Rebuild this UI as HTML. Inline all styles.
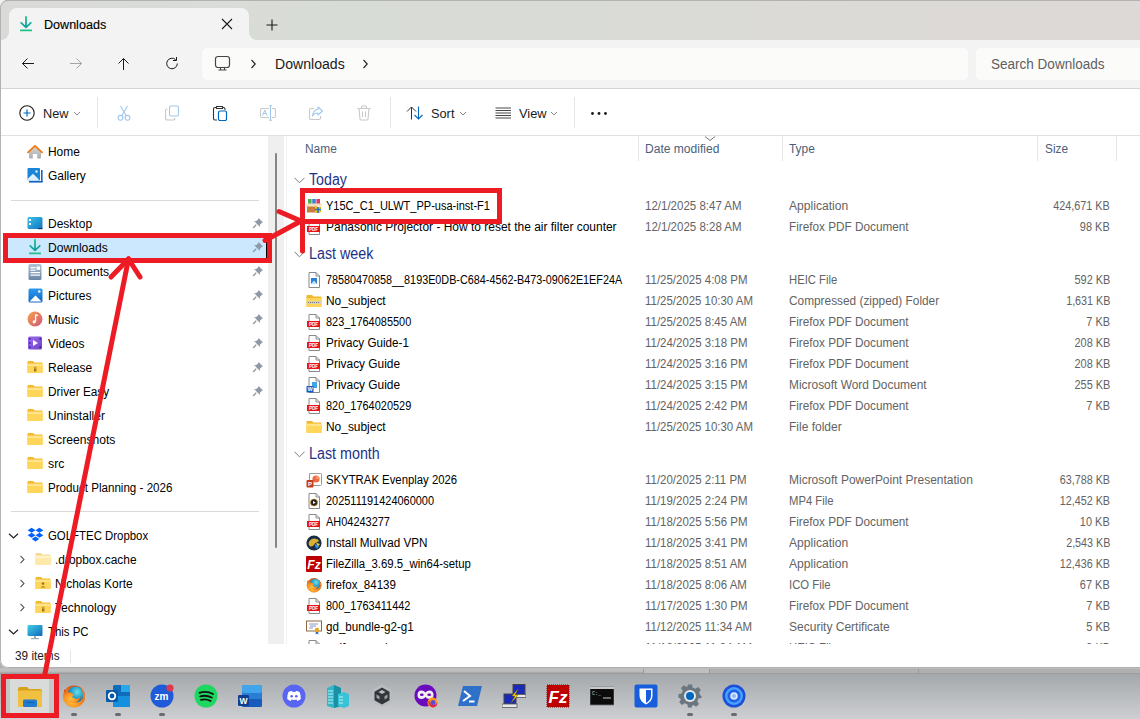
<!DOCTYPE html>
<html><head><meta charset="utf-8">
<style>
*{margin:0;padding:0;box-sizing:border-box}
html,body{width:1140px;height:719px;overflow:hidden;font-family:"Liberation Sans",sans-serif;position:relative;background:#b0b0b4}
.a{position:absolute;display:block}
.t{position:absolute;white-space:nowrap;line-height:14px;height:14px}
.side{font-size:12px;color:#000}
.nm{font-size:12px;color:#000}
.det{font-size:12px;color:#636363}
.grp{font-size:15px;color:#1e3287;line-height:18px;height:18px}
.hdr{font-size:12px;color:#4c607a}
.red{position:absolute;border:5px solid #ed1c24}
.rl{position:absolute;height:5px;background:#ed1c24;border-radius:2.5px;transform-origin:0 50%}
</style></head>
<body>

<div class="a" style="left:0;top:0;width:20px;height:20px;background:#efefef"></div>
<div class="a" style="left:0;top:0;width:1140px;height:668px;overflow:hidden;border-radius:8px 0 0 8px;background:#fff">
<div class="a" style="left:0;top:0;width:1140px;height:40px;background:linear-gradient(90deg,#dadbd9 0%,#d8dcd6 30%,#d9dbd6 50%,#dcdad6 75%,#dcd9d6 100%)"></div>
<div class="a" style="left:0;top:32px;width:9px;height:8px;background:#f3f3f3"></div><div class="a" style="left:0;top:24px;width:9px;height:16px;background:#dadbd9;border-radius:0 0 8px 0"></div>
<div class="a" style="left:249px;top:32px;width:9px;height:8px;background:#f3f3f3"></div><div class="a" style="left:249px;top:24px;width:9px;height:16px;background:#d8dcd6;border-radius:0 0 0 8px"></div>
<div class="a" style="left:0;top:0;width:1140px;height:1px;background:#a8a8a8"></div>
<div class="a" style="left:468px;top:0;width:113px;height:1px;background:linear-gradient(90deg,#777 0,#333 9px,#222 50%,#333 98px,#777 100%)"></div>
<div class="a" style="left:923px;top:0;width:6px;height:1px;background:#333"></div><div class="a" style="left:945px;top:0;width:6px;height:1px;background:#333"></div>
<div class="a" style="left:9px;top:8px;width:240px;height:33px;background:#f3f3f3;border-radius:8px 8px 0 0"></div>
<svg class="a" style="left:18px;top:16px" width="16" height="16" viewBox="0 0 16 16"><defs><linearGradient id="dl" x1="0" y1="0" x2="0" y2="1"><stop offset="0" stop-color="#1fc08a"/><stop offset="1" stop-color="#15a0a0"/></linearGradient></defs>
<path d="M8 1 V11 M3.2 6.8 L8 11.3 L12.8 6.8" fill="none" stroke="url(#dl)" stroke-width="1.8" stroke-linecap="round" stroke-linejoin="round"/><rect x="2" y="13.6" width="12" height="1.7" rx="0.4" fill="#20c08a"/></svg>
<div class="t side" style="left:44px;top:18px;font-size:12px;transform:scaleX(1.0471);transform-origin:left 50%;color:#000;-webkit-text-stroke:0.12px #000;">Downloads</div>
<svg class="a" style="left:221px;top:18px" width="12" height="12" viewBox="0 0 12 12"><path d="M1 1 L11 11 M11 1 L1 11" stroke="#1a1a1a" stroke-width="1.1"/></svg>
<svg class="a" style="left:266px;top:19px" width="12" height="12" viewBox="0 0 12 12"><path d="M6 0.5 V11.5 M0.5 6 H11.5" stroke="#1a1a1a" stroke-width="1.1"/></svg>
<div class="a" style="left:0;top:40px;width:1140px;height:48px;background:#f3f3f3"></div>
<div class="a" style="left:0;top:88px;width:1140px;height:1px;background:#d5d5d5"></div>
<svg class="a" style="left:21px;top:57px" width="14" height="14" viewBox="0 0 14 14"><path d="M13 6.5 H1.5 M6.5 1.5 L1.5 6.5 L6.5 11.5" fill="none" stroke="#1a1a1a" stroke-width="1"/></svg>
<svg class="a" style="left:69px;top:57px" width="14" height="14" viewBox="0 0 14 14"><path d="M1 6.5 H12.5 M7.5 1.5 L12.5 6.5 L7.5 11.5" fill="none" stroke="#a3a3a3" stroke-width="1"/></svg>
<svg class="a" style="left:116px;top:57px" width="14" height="14" viewBox="0 0 14 14"><path d="M7.5 13 V1.5 M2.5 6.5 L7.5 1.5 L12.5 6.5" fill="none" stroke="#1a1a1a" stroke-width="1"/></svg>
<svg class="a" style="left:165px;top:56px" width="14" height="14" viewBox="0 0 14 14"><path d="M12.3 7.5 A5.3 5.3 0 1 1 10.6 3.6" fill="none" stroke="#1a1a1a" stroke-width="1"/><path d="M11.5 1 V4.5 H8" fill="none" stroke="#1a1a1a" stroke-width="1"/></svg>
<div class="a" style="left:202px;top:48px;width:766px;height:32px;background:#fbfbfa;border-radius:5px"></div>
<svg class="a" style="left:214px;top:55px" width="18" height="17" viewBox="0 0 18 17"><rect x="1.5" y="1.5" width="14" height="11" rx="2.5" fill="none" stroke="#454545" stroke-width="1.2"/><path d="M6.5 12.5 V14.5 M10.5 12.5 V14.5 M4.5 15 H12.5" stroke="#454545" stroke-width="1.1"/></svg>
<svg class="a" style="left:249px;top:59px" width="8" height="10" viewBox="0 0 8 10"><path d="M2.5 1 L6.2 5 L2.5 9" fill="none" stroke="#2a2a2a" stroke-width="1.2"/></svg>
<div class="t side" style="left:275px;top:56px;font-size:14px;transform:scaleX(1.0068);transform-origin:left 50%;color:#1a1a1a;line-height:16px;height:16px;">Downloads</div>
<svg class="a" style="left:361px;top:59px" width="8" height="10" viewBox="0 0 8 10"><path d="M2.5 1 L6.2 5 L2.5 9" fill="none" stroke="#2a2a2a" stroke-width="1.2"/></svg>
<div class="a" style="left:976px;top:48px;width:200px;height:32px;background:#fbfbfa;border-radius:5px"></div>
<div class="t side" style="left:991px;top:56px;font-size:14px;transform:scaleX(0.9659);transform-origin:left 50%;color:#5f5f5f;line-height:16px;height:16px;">Search Downloads</div>
<div class="a" style="left:0;top:89px;width:1140px;height:46px;background:#fff"></div>
<div class="a" style="left:0;top:135px;width:1140px;height:1px;background:#e1e1e1"></div>
<svg class="a" style="left:19px;top:105px" width="16" height="16" viewBox="0 0 16 16"><circle cx="8" cy="8" r="7.2" fill="none" stroke="#1a1a1a" stroke-width="1.1"/><path d="M8 4.5 V11.5 M4.5 8 H11.5" stroke="#0067c0" stroke-width="1.2"/></svg>
<div class="t side" style="left:43px;top:107px;font-size:13px;transform:scaleX(0.9829);transform-origin:left 50%;color:#1a1a1a;">New</div>
<svg class="a" style="left:73px;top:111px" width="8" height="5" viewBox="0 0 8 5"><path d="M1 1 L4 4 L7 1" fill="none" stroke="#8a8a8a" stroke-width="1"/></svg>
<div class="a" style="left:97px;top:97px;width:1px;height:31px;background:#e5e5e5"></div>
<svg class="a" style="left:116px;top:105px" width="16" height="16" viewBox="0 0 16 16"><path d="M4.5 1 L10.5 11 M11.5 1 L5.5 11" stroke="#9fc8ec" stroke-width="1.1"/><circle cx="4.5" cy="12.8" r="2.4" fill="none" stroke="#9fc8ec" stroke-width="1.1"/><circle cx="11.5" cy="12.8" r="2.4" fill="none" stroke="#9fc8ec" stroke-width="1.1"/></svg>
<svg class="a" style="left:164px;top:105px" width="16" height="16" viewBox="0 0 16 16"><rect x="5.5" y="1" width="9" height="10" rx="1.5" fill="none" stroke="#9fc8ec" stroke-width="1.1"/><path d="M3.5 4 Q1.5 4 1.5 6 V13 Q1.5 15 3.5 15 H9 Q11 15 11 13" fill="none" stroke="#c8c8c8" stroke-width="1.1"/></svg>
<svg class="a" style="left:212px;top:105px" width="16" height="16" viewBox="0 0 16 16"><path d="M4 2.5 H3 Q1.5 2.5 1.5 4 V13.5 Q1.5 15 3 15 H5" fill="none" stroke="#333" stroke-width="1.1"/><path d="M4.5 1.5 H10.5 V3.5 H4.5Z M10.5 2.5 H11.5 Q13 2.5 13 4 V5" fill="none" stroke="#333" stroke-width="1.1"/><rect x="6.5" y="6" width="8" height="9.5" rx="1.5" fill="none" stroke="#0067c0" stroke-width="1.2"/></svg>
<svg class="a" style="left:260px;top:105px" width="16" height="16" viewBox="0 0 16 16"><rect x="0.5" y="3.5" width="15" height="9" rx="1.5" fill="none" stroke="#c8c8c8" stroke-width="1.1"/><rect x="9" y="2" width="3" height="12" fill="#fff"/><path d="M10.5 0.5 V15.5 M9 0.8 H12 M9 15.2 H12" stroke="#9fc8ec" stroke-width="1.1"/><path d="M2.5 10.5 L4.8 5 L7 10.5 M3.3 8.6 H6.3" fill="none" stroke="#9fc8ec" stroke-width="1"/></svg>
<svg class="a" style="left:308px;top:105px" width="16" height="16" viewBox="0 0 16 16"><path d="M6 3.5 H3 Q1.5 3.5 1.5 5 V13 Q1.5 14.5 3 14.5 H11 Q12.5 14.5 12.5 13 V11" fill="none" stroke="#c8c8c8" stroke-width="1.1"/><path d="M10 2 L14.5 6 L10 10 V8 Q6 8 4.5 11 Q5 5 10 4.2Z" fill="none" stroke="#9fc8ec" stroke-width="1.1" stroke-linejoin="round"/></svg>
<svg class="a" style="left:356px;top:105px" width="16" height="16" viewBox="0 0 16 16"><path d="M1.5 3.5 H14.5 M5.5 3.5 V2 Q5.5 1 6.5 1 H9.5 Q10.5 1 10.5 2 V3.5 M3 3.5 L4 14 Q4.1 15 5 15 H11 Q11.9 15 12 14 L13 3.5 M6.5 6.5 V12 M9.5 6.5 V12" fill="none" stroke="#c8c8c8" stroke-width="1.1"/></svg>
<div class="a" style="left:390px;top:97px;width:1px;height:31px;background:#e5e5e5"></div>
<svg class="a" style="left:406px;top:106px" width="18" height="14" viewBox="0 0 18 14"><path d="M5.5 13.5 V1 M1 5.5 L5.5 1 L10 5.5" fill="none" stroke="#333" stroke-width="1"/><path d="M12.5 0.5 V13 M8.5 9 L12.5 13 L16.5 9" fill="none" stroke="#0067c0" stroke-width="1.1"/></svg>
<div class="t side" style="left:431px;top:107px;font-size:13px;transform:scaleX(0.9826);transform-origin:left 50%;color:#1a1a1a;">Sort</div>
<svg class="a" style="left:459px;top:111px" width="8" height="5" viewBox="0 0 8 5"><path d="M1 1 L4 4 L7 1" fill="none" stroke="#8a8a8a" stroke-width="1"/></svg>
<svg class="a" style="left:495px;top:107px" width="17" height="12" viewBox="0 0 17 12"><path d="M0.5 1 H16 M0.5 3.5 H16 M0.5 6 H16 M0.5 8.5 H16 M0.5 11 H16" stroke="#333" stroke-width="0.9"/></svg>
<div class="t side" style="left:519px;top:107px;font-size:13px;transform:scaleX(0.9888);transform-origin:left 50%;color:#1a1a1a;">View</div>
<svg class="a" style="left:550px;top:111px" width="8" height="5" viewBox="0 0 8 5"><path d="M1 1 L4 4 L7 1" fill="none" stroke="#8a8a8a" stroke-width="1"/></svg>
<div class="a" style="left:574px;top:97px;width:1px;height:31px;background:#e5e5e5"></div>
<svg class="a" style="left:590px;top:111px" width="18" height="6" viewBox="0 0 18 6"><circle cx="2.5" cy="2.5" r="1.4" fill="#1a1a1a"/><circle cx="9" cy="2.5" r="1.4" fill="#1a1a1a"/><circle cx="15.5" cy="2.5" r="1.4" fill="#1a1a1a"/></svg>
<div class="a" style="left:4px;top:236px;width:264px;height:24px;background:#cce8ff"></div>
<div class="a" style="left:266px;top:236px;width:1px;height:24px;background:#000"></div>
<svg class="a" style="left:27px;top:144px" width="16" height="16" viewBox="0 0 16 16"><defs><linearGradient id="hg" x1="0" y1="0" x2="0" y2="1"><stop offset="0" stop-color="#d4d6d8"/><stop offset="1" stop-color="#a9abad"/></linearGradient></defs>
<path d="M2 8 L8 2.6 L14 8 V13.6 Q14 14.6 13 14.6 H10.2 V10 H5.8 V14.6 H3 Q2 14.6 2 13.6Z" fill="url(#hg)"/>
<path d="M1 8.3 L8 1.8 L15 8.3" fill="none" stroke="#f07a10" stroke-width="1.8" stroke-linecap="round" stroke-linejoin="round"/></svg>
<div class="t side" style="left:48px;top:145px;font-size:12px;transform:scaleX(0.9929);transform-origin:left 50%;">Home</div>
<svg class="a" style="left:27px;top:167px" width="16" height="16" viewBox="0 0 16 16"><rect x="0.5" y="1" width="12.5" height="12.5" rx="1" fill="#1a86d9"/>
<path d="M0.5 12 L6 6.8 L11.5 12 V13.5 H0.5Z" fill="#dff0ff"/><rect x="8.5" y="3.5" width="2" height="2" fill="#fff"/>
<rect x="14" y="3" width="1.6" height="12" fill="#1565c0"/><rect x="2" y="14" width="13.6" height="1.6" fill="#1565c0"/></svg>
<div class="t side" style="left:48px;top:169px;font-size:12px;transform:scaleX(0.9957);transform-origin:left 50%;">Gallery</div>
<svg class="a" style="left:27px;top:215px" width="16" height="16" viewBox="0 0 16 16"><defs><linearGradient id="dg" x1="0" y1="0" x2="1" y2="1"><stop offset="0" stop-color="#3cc3e6"/><stop offset="1" stop-color="#1273c2"/></linearGradient></defs>
<rect x="0.5" y="2" width="15" height="12" rx="1.5" fill="url(#dg)"/><rect x="2" y="4" width="2" height="2" fill="#fff"/><rect x="2" y="8" width="2" height="2" fill="#fff"/><rect x="11" y="13" width="4.5" height="1.2" fill="#0b3a6a"/></svg>
<div class="t side" style="left:48px;top:217px;font-size:12px;transform:scaleX(1.0011);transform-origin:left 50%;">Desktop</div>
<svg class="a" style="left:252px;top:217px" width="12" height="12" viewBox="0 0 12 12"><path d="M6.5 1 L11 5.5 L9.6 6 L7.8 8 L8 10 L2 4 L4 4.2 L6 2.4Z" fill="#8d99a6"/><path d="M4.2 7.8 L1 11" stroke="#8d99a6" stroke-width="1.3"/></svg>
<svg class="a" style="left:27px;top:239px" width="16" height="16" viewBox="0 0 16 16"><defs><linearGradient id="dl" x1="0" y1="0" x2="0" y2="1"><stop offset="0" stop-color="#1fc08a"/><stop offset="1" stop-color="#15a0a0"/></linearGradient></defs>
<path d="M8 1 V11 M3.2 6.8 L8 11.3 L12.8 6.8" fill="none" stroke="url(#dl)" stroke-width="1.8" stroke-linecap="round" stroke-linejoin="round"/><rect x="2" y="13.6" width="12" height="1.7" rx="0.4" fill="#20c08a"/></svg>
<div class="t side" style="left:48px;top:241px;font-size:12px;transform:scaleX(1.0068);transform-origin:left 50%;">Downloads</div>
<svg class="a" style="left:252px;top:241px" width="12" height="12" viewBox="0 0 12 12"><path d="M6.5 1 L11 5.5 L9.6 6 L7.8 8 L8 10 L2 4 L4 4.2 L6 2.4Z" fill="#8d99a6"/><path d="M4.2 7.8 L1 11" stroke="#8d99a6" stroke-width="1.3"/></svg>
<svg class="a" style="left:27px;top:264px" width="16" height="16" viewBox="0 0 16 16"><defs><linearGradient id="dc" x1="0" y1="0" x2="0" y2="1"><stop offset="0" stop-color="#b0c2d4"/><stop offset="1" stop-color="#6a86a6"/></linearGradient></defs>
<rect x="1.5" y="0" width="13" height="16" rx="1.5" fill="url(#dc)"/><rect x="3.5" y="3" width="5" height="1.3" fill="#fff"/><rect x="9.5" y="2.5" width="3.5" height="3.3" fill="#fff"/><rect x="3.5" y="5.5" width="5" height="1.2" fill="#fff"/><rect x="3.5" y="8" width="9.5" height="1.2" fill="#fff"/><rect x="3.5" y="10.5" width="9.5" height="1.2" fill="#fff"/></svg>
<div class="t side" style="left:48px;top:265px;font-size:12px;transform:scaleX(1.0072);transform-origin:left 50%;">Documents</div>
<svg class="a" style="left:252px;top:265px" width="12" height="12" viewBox="0 0 12 12"><path d="M6.5 1 L11 5.5 L9.6 6 L7.8 8 L8 10 L2 4 L4 4.2 L6 2.4Z" fill="#8d99a6"/><path d="M4.2 7.8 L1 11" stroke="#8d99a6" stroke-width="1.3"/></svg>
<svg class="a" style="left:28px;top:288px" width="16" height="16" viewBox="0 0 16 16"><defs><linearGradient id="pg" x1="0" y1="0" x2="0" y2="1"><stop offset="0" stop-color="#2b9af0"/><stop offset="1" stop-color="#1466c2"/></linearGradient></defs><rect x="0.5" y="0.5" width="14" height="14" rx="1.5" fill="url(#pg)"/><path d="M1.5 13.5 L7.5 7.5 L13.5 13.5Z" fill="#fff"/><circle cx="11.3" cy="3.5" r="1.2" fill="#fff"/></svg>
<div class="t side" style="left:48px;top:289px;font-size:12px;transform:scaleX(1.0025);transform-origin:left 50%;">Pictures</div>
<svg class="a" style="left:252px;top:289px" width="12" height="12" viewBox="0 0 12 12"><path d="M6.5 1 L11 5.5 L9.6 6 L7.8 8 L8 10 L2 4 L4 4.2 L6 2.4Z" fill="#8d99a6"/><path d="M4.2 7.8 L1 11" stroke="#8d99a6" stroke-width="1.3"/></svg>
<svg class="a" style="left:27px;top:311px" width="16" height="16" viewBox="0 0 16 16"><defs><linearGradient id="mu" x1="0" y1="0" x2="1" y2="1"><stop offset="0" stop-color="#f6a34a"/><stop offset="1" stop-color="#d2567a"/></linearGradient></defs>
<circle cx="8" cy="8" r="7.5" fill="url(#mu)"/><path d="M8.6 3.5 V10.5" stroke="#fff" stroke-width="1.3"/><circle cx="7.2" cy="10.8" r="1.6" fill="#fff"/><path d="M8.6 3.5 L11 4.8" stroke="#fff" stroke-width="1.3"/></svg>
<div class="t side" style="left:48px;top:313px;font-size:12px;transform:scaleX(0.9876);transform-origin:left 50%;">Music</div>
<svg class="a" style="left:252px;top:313px" width="12" height="12" viewBox="0 0 12 12"><path d="M6.5 1 L11 5.5 L9.6 6 L7.8 8 L8 10 L2 4 L4 4.2 L6 2.4Z" fill="#8d99a6"/><path d="M4.2 7.8 L1 11" stroke="#8d99a6" stroke-width="1.3"/></svg>
<svg class="a" style="left:27px;top:335px" width="16" height="16" viewBox="0 0 16 16"><defs><linearGradient id="vi" x1="0" y1="0" x2="1" y2="1"><stop offset="0" stop-color="#9b6cf0"/><stop offset="1" stop-color="#7042c8"/></linearGradient></defs>
<rect x="1" y="1.5" width="14" height="13" rx="1.5" fill="url(#vi)"/><path d="M6 5 L11 8 L6 11Z" fill="#fff"/><rect x="2" y="3" width="1.5" height="1.5" fill="#3a1a80"/><rect x="2" y="7.2" width="1.5" height="1.5" fill="#3a1a80"/><rect x="2" y="11.4" width="1.5" height="1.5" fill="#3a1a80"/><rect x="12.5" y="3" width="1.5" height="1.5" fill="#3a1a80"/><rect x="12.5" y="11.4" width="1.5" height="1.5" fill="#3a1a80"/></svg>
<div class="t side" style="left:48px;top:337px;font-size:12px;transform:scaleX(0.9988);transform-origin:left 50%;">Videos</div>
<svg class="a" style="left:252px;top:337px" width="12" height="12" viewBox="0 0 12 12"><path d="M6.5 1 L11 5.5 L9.6 6 L7.8 8 L8 10 L2 4 L4 4.2 L6 2.4Z" fill="#8d99a6"/><path d="M4.2 7.8 L1 11" stroke="#8d99a6" stroke-width="1.3"/></svg>
<svg class="a" style="left:27px;top:359px" width="16" height="16" viewBox="0 0 16 16"><path d="M0.5 3 Q0.5 2 1.5 2 H6 L7.5 3.5 H14.5 Q15.5 3.5 15.5 4.5 V13 Q15.5 14 14.5 14 H1.5 Q0.5 14 0.5 13Z" fill="#f0b92c"/>
<path d="M0.5 5.5 Q0.5 4.8 1.3 4.8 H14.7 Q15.5 4.8 15.5 5.6 V13.2 Q15.5 14 14.7 14 H1.3 Q0.5 14 0.5 13.2Z" fill="#ffd65a"/><path d="M0.5 5.5 Q0.5 4.8 1.3 4.8 H14.7 Q15.5 4.8 15.5 5.6 V7 H0.5Z" fill="#ffe48c"/><path d="M7 9.5 h2.4 v3 h-2.4z" fill="#a0741c"/><path d="M7.4 9.5 v-1 a0.8 0.8 0 0 1 1.6 0 v1" fill="none" stroke="#a0741c" stroke-width="0.7"/></svg>
<div class="t side" style="left:48px;top:361px;font-size:12px;transform:scaleX(1.0012);transform-origin:left 50%;">Release</div>
<svg class="a" style="left:252px;top:361px" width="12" height="12" viewBox="0 0 12 12"><path d="M6.5 1 L11 5.5 L9.6 6 L7.8 8 L8 10 L2 4 L4 4.2 L6 2.4Z" fill="#8d99a6"/><path d="M4.2 7.8 L1 11" stroke="#8d99a6" stroke-width="1.3"/></svg>
<svg class="a" style="left:27px;top:383px" width="16" height="16" viewBox="0 0 16 16"><path d="M0.5 3 Q0.5 2 1.5 2 H6 L7.5 3.5 H14.5 Q15.5 3.5 15.5 4.5 V13 Q15.5 14 14.5 14 H1.5 Q0.5 14 0.5 13Z" fill="#f0b92c"/>
<path d="M0.5 5.5 Q0.5 4.8 1.3 4.8 H14.7 Q15.5 4.8 15.5 5.6 V13.2 Q15.5 14 14.7 14 H1.3 Q0.5 14 0.5 13.2Z" fill="#ffd65a"/><path d="M0.5 5.5 Q0.5 4.8 1.3 4.8 H14.7 Q15.5 4.8 15.5 5.6 V7 H0.5Z" fill="#ffe48c"/></svg>
<div class="t side" style="left:48px;top:385px;font-size:12px;transform:scaleX(0.9871);transform-origin:left 50%;">Driver Easy</div>
<svg class="a" style="left:252px;top:385px" width="12" height="12" viewBox="0 0 12 12"><path d="M6.5 1 L11 5.5 L9.6 6 L7.8 8 L8 10 L2 4 L4 4.2 L6 2.4Z" fill="#8d99a6"/><path d="M4.2 7.8 L1 11" stroke="#8d99a6" stroke-width="1.3"/></svg>
<svg class="a" style="left:27px;top:407px" width="16" height="16" viewBox="0 0 16 16"><path d="M0.5 3 Q0.5 2 1.5 2 H6 L7.5 3.5 H14.5 Q15.5 3.5 15.5 4.5 V13 Q15.5 14 14.5 14 H1.5 Q0.5 14 0.5 13Z" fill="#f0b92c"/>
<path d="M0.5 5.5 Q0.5 4.8 1.3 4.8 H14.7 Q15.5 4.8 15.5 5.6 V13.2 Q15.5 14 14.7 14 H1.3 Q0.5 14 0.5 13.2Z" fill="#ffd65a"/><path d="M0.5 5.5 Q0.5 4.8 1.3 4.8 H14.7 Q15.5 4.8 15.5 5.6 V7 H0.5Z" fill="#ffe48c"/></svg>
<div class="t side" style="left:48px;top:409px;font-size:12px;transform:scaleX(1.0060);transform-origin:left 50%;">Uninstaller</div>
<svg class="a" style="left:27px;top:431px" width="16" height="16" viewBox="0 0 16 16"><path d="M0.5 3 Q0.5 2 1.5 2 H6 L7.5 3.5 H14.5 Q15.5 3.5 15.5 4.5 V13 Q15.5 14 14.5 14 H1.5 Q0.5 14 0.5 13Z" fill="#f0b92c"/>
<path d="M0.5 5.5 Q0.5 4.8 1.3 4.8 H14.7 Q15.5 4.8 15.5 5.6 V13.2 Q15.5 14 14.7 14 H1.3 Q0.5 14 0.5 13.2Z" fill="#ffd65a"/><path d="M0.5 5.5 Q0.5 4.8 1.3 4.8 H14.7 Q15.5 4.8 15.5 5.6 V7 H0.5Z" fill="#ffe48c"/></svg>
<div class="t side" style="left:48px;top:433px;font-size:12px;transform:scaleX(1.0097);transform-origin:left 50%;">Screenshots</div>
<svg class="a" style="left:27px;top:455px" width="16" height="16" viewBox="0 0 16 16"><path d="M0.5 3 Q0.5 2 1.5 2 H6 L7.5 3.5 H14.5 Q15.5 3.5 15.5 4.5 V13 Q15.5 14 14.5 14 H1.5 Q0.5 14 0.5 13Z" fill="#f0b92c"/>
<path d="M0.5 5.5 Q0.5 4.8 1.3 4.8 H14.7 Q15.5 4.8 15.5 5.6 V13.2 Q15.5 14 14.7 14 H1.3 Q0.5 14 0.5 13.2Z" fill="#ffd65a"/><path d="M0.5 5.5 Q0.5 4.8 1.3 4.8 H14.7 Q15.5 4.8 15.5 5.6 V7 H0.5Z" fill="#ffe48c"/></svg>
<div class="t side" style="left:48px;top:457px;font-size:12px;transform:scaleX(1.0230);transform-origin:left 50%;">src</div>
<svg class="a" style="left:27px;top:479px" width="16" height="16" viewBox="0 0 16 16"><path d="M0.5 3 Q0.5 2 1.5 2 H6 L7.5 3.5 H14.5 Q15.5 3.5 15.5 4.5 V13 Q15.5 14 14.5 14 H1.5 Q0.5 14 0.5 13Z" fill="#f0b92c"/>
<path d="M0.5 5.5 Q0.5 4.8 1.3 4.8 H14.7 Q15.5 4.8 15.5 5.6 V13.2 Q15.5 14 14.7 14 H1.3 Q0.5 14 0.5 13.2Z" fill="#ffd65a"/><path d="M0.5 5.5 Q0.5 4.8 1.3 4.8 H14.7 Q15.5 4.8 15.5 5.6 V7 H0.5Z" fill="#ffe48c"/></svg>
<div class="t side" style="left:48px;top:481px;font-size:12px;transform:scaleX(0.9664);transform-origin:left 50%;">Product Planning - 2026</div>
<div class="a" style="left:11px;top:200px;width:248px;height:1px;background:#dadada"></div>
<div class="a" style="left:11px;top:511px;width:248px;height:1px;background:#dadada"></div>
<svg class="a" style="left:8px;top:533px" width="11" height="6" viewBox="0 0 11 6"><path d="M1 0.8 L5.5 5 L10 0.8" fill="none" stroke="#222" stroke-width="1.2"/></svg>
<svg class="a" style="left:27px;top:527px" width="17" height="16" viewBox="0 0 17 16"><g fill="#0061fe"><path d="M4.6 0.8 L8.5 3.3 L4.6 5.8 L0.6 3.3Z"/><path d="M12.4 0.8 L16.4 3.3 L12.4 5.8 L8.5 3.3Z"/><path d="M4.6 5.8 L8.5 8.3 L4.6 10.8 L0.6 8.3Z"/><path d="M12.4 5.8 L16.4 8.3 L12.4 10.8 L8.5 8.3Z"/><path d="M4.7 11.9 L8.5 9.5 L12.3 11.9 L8.5 14.4Z"/></g></svg>
<div class="t side" style="left:48px;top:529px;font-size:12px;transform:scaleX(0.9506);transform-origin:left 50%;">GOLFTEC Dropbox</div>
<svg class="a" style="left:18px;top:555px" width="8" height="9" viewBox="0 0 8 9"><path d="M2.5 0.8 L6 4.5 L2.5 8.2" fill="none" stroke="#555" stroke-width="1.1"/></svg>
<svg class="a" style="left:35px;top:551px" width="16" height="16" viewBox="0 0 16 16"><path d="M0.5 3 Q0.5 2 1.5 2 H6 L7.5 3.5 H14.5 Q15.5 3.5 15.5 4.5 V13 Q15.5 14 14.5 14 H1.5 Q0.5 14 0.5 13Z" fill="#f5dc92"/>
<path d="M0.5 5.5 Q0.5 4.8 1.3 4.8 H14.7 Q15.5 4.8 15.5 5.6 V13.2 Q15.5 14 14.7 14 H1.3 Q0.5 14 0.5 13.2Z" fill="#ffe9a8"/><path d="M0.5 5.5 Q0.5 4.8 1.3 4.8 H14.7 Q15.5 4.8 15.5 5.6 V7 H0.5Z" fill="#fff2c8"/></svg>
<div class="t side" style="left:55px;top:553px;font-size:12px;transform:scaleX(0.9937);transform-origin:left 50%;">.dropbox.cache</div>
<svg class="a" style="left:18px;top:579px" width="8" height="9" viewBox="0 0 8 9"><path d="M2.5 0.8 L6 4.5 L2.5 8.2" fill="none" stroke="#555" stroke-width="1.1"/></svg>
<svg class="a" style="left:35px;top:575px" width="16" height="16" viewBox="0 0 16 16"><path d="M0.5 3 Q0.5 2 1.5 2 H6 L7.5 3.5 H14.5 Q15.5 3.5 15.5 4.5 V13 Q15.5 14 14.5 14 H1.5 Q0.5 14 0.5 13Z" fill="#f0b92c"/>
<path d="M0.5 5.5 Q0.5 4.8 1.3 4.8 H14.7 Q15.5 4.8 15.5 5.6 V13.2 Q15.5 14 14.7 14 H1.3 Q0.5 14 0.5 13.2Z" fill="#ffd65a"/><path d="M0.5 5.5 Q0.5 4.8 1.3 4.8 H14.7 Q15.5 4.8 15.5 5.6 V7 H0.5Z" fill="#ffe48c"/><circle cx="8" cy="8.6" r="1.3" fill="#a0741c"/><path d="M5.6 12.5 Q8 9.8 10.4 12.5Z" fill="#a0741c"/></svg>
<div class="t side" style="left:55px;top:577px;font-size:12px;transform:scaleX(0.9945);transform-origin:left 50%;">Nicholas Korte</div>
<svg class="a" style="left:18px;top:603px" width="8" height="9" viewBox="0 0 8 9"><path d="M2.5 0.8 L6 4.5 L2.5 8.2" fill="none" stroke="#555" stroke-width="1.1"/></svg>
<svg class="a" style="left:35px;top:599px" width="16" height="16" viewBox="0 0 16 16"><path d="M0.5 3 Q0.5 2 1.5 2 H6 L7.5 3.5 H14.5 Q15.5 3.5 15.5 4.5 V13 Q15.5 14 14.5 14 H1.5 Q0.5 14 0.5 13Z" fill="#f0b92c"/>
<path d="M0.5 5.5 Q0.5 4.8 1.3 4.8 H14.7 Q15.5 4.8 15.5 5.6 V13.2 Q15.5 14 14.7 14 H1.3 Q0.5 14 0.5 13.2Z" fill="#ffd65a"/><path d="M0.5 5.5 Q0.5 4.8 1.3 4.8 H14.7 Q15.5 4.8 15.5 5.6 V7 H0.5Z" fill="#ffe48c"/><path d="M7 9.5 h2.4 v3 h-2.4z" fill="#a0741c"/><path d="M7.4 9.5 v-1 a0.8 0.8 0 0 1 1.6 0 v1" fill="none" stroke="#a0741c" stroke-width="0.7"/></svg>
<div class="t side" style="left:55px;top:601px;font-size:12px;transform:scaleX(1.0099);transform-origin:left 50%;">Technology</div>
<svg class="a" style="left:8px;top:629px" width="11" height="6" viewBox="0 0 11 6"><path d="M1 0.8 L5.5 5 L10 0.8" fill="none" stroke="#222" stroke-width="1.2"/></svg>
<svg class="a" style="left:27px;top:624px" width="16" height="16" viewBox="0 0 16 16"><defs><linearGradient id="pc" x1="0" y1="0" x2="1" y2="1"><stop offset="0" stop-color="#3fd0e8"/><stop offset="1" stop-color="#1166b8"/></linearGradient></defs>
<rect x="0.5" y="1" width="15" height="11" rx="1" fill="url(#pc)"/><rect x="7" y="12" width="2" height="2" fill="#9aa7b4"/><rect x="4" y="14" width="8" height="1.2" fill="#9aa7b4"/></svg>
<div class="t side" style="left:48px;top:625px;font-size:12px;transform:scaleX(0.9517);transform-origin:left 50%;">This PC</div>
<div class="a" style="left:268px;top:136px;width:16px;height:508px;background:#efefef"></div>
<div class="a" style="left:275px;top:153px;width:2px;height:395px;background:#858585;border-radius:1px"></div>
<div class="a" style="left:286px;top:136px;width:1px;height:508px;background:#f3f3f3"></div>
<div class="t side" style="left:15px;top:649px;font-size:12px;transform:scaleX(0.9823);transform-origin:left 50%;color:#1a1a1a;">39 items</div>
<div class="a" style="left:70px;top:650px;width:1px;height:13px;background:#e5e5e5"></div>
<div class="a" style="left:287px;top:136px;width:853px;height:508px;overflow:hidden">
<div class="t hdr" style="left:18px;top:6px;font-size:12px;transform:scaleX(0.9929);transform-origin:left 50%;">Name</div>
<div class="t hdr" style="left:358px;top:6px;font-size:12px;transform:scaleX(1.0049);transform-origin:left 50%;">Date modified</div>
<div class="t hdr" style="left:502px;top:6px;font-size:12px;transform:scaleX(0.9925);transform-origin:left 50%;">Type</div>
<div class="t hdr" style="left:758px;top:6px;font-size:12px;transform:scaleX(0.9849);transform-origin:left 50%;">Size</div>
<div class="a" style="left:351px;top:0;width:1px;height:25px;background:#e5e5e5"></div>
<div class="a" style="left:495px;top:0;width:1px;height:25px;background:#e5e5e5"></div>
<div class="a" style="left:750px;top:0;width:1px;height:25px;background:#e5e5e5"></div>
<div class="a" style="left:829px;top:0;width:1px;height:25px;background:#e5e5e5"></div>
<svg class="a" style="left:417px;top:0px" width="12" height="5" viewBox="0 0 12 5"><path d="M1 0.5 L6 4.5 L11 0.5" fill="none" stroke="#777" stroke-width="1"/></svg>
<svg class="a" style="left:7px;top:41px" width="12" height="7" viewBox="0 0 12 7"><path d="M0.5 0.8 L5.5 5.8 L10.5 0.8" fill="none" stroke="#7a7a7a" stroke-width="1"/></svg>
<div class="t grp" style="left:22px;top:35px;font-size:15px;transform:scaleX(0.9122);transform-origin:left 50%;font-size:15.6px;">Today</div>
<svg class="a" style="left:19px;top:62px" width="16" height="16" viewBox="0 0 16 16"><rect x="2" y="1" width="3.6" height="5" fill="#4caf50"/><rect x="6.2" y="1" width="3.6" height="5" fill="#3f7fd0"/><rect x="10.4" y="1" width="3.6" height="5" fill="#d83a6a"/><rect x="0.5" y="5.5" width="15" height="3" fill="#f5e0b8"/><rect x="1" y="8.5" width="10" height="6" fill="#c97b3a"/><path d="M9 9 H15 V14 Q12 16 9 14Z" fill="#f2c400"/><path d="M9 11.5 H15 M12 9 V15" stroke="#1e73d8" stroke-width="1.6"/></svg>
<div class="t nm" style="left:39px;top:63px;font-size:12px;transform:scaleX(0.9183);transform-origin:left 50%;">Y15C_C1_ULWT_PP-usa-inst-F1</div>
<div class="t det" style="left:358px;top:63px;font-size:12px;transform:scaleX(0.9589);transform-origin:left 50%;">12/1/2025 8:47 AM</div>
<div class="t det" style="left:502px;top:63px;font-size:12px;transform:scaleX(1.0079);transform-origin:left 50%;">Application</div>
<div class="t det" style="right:30px;top:63px;font-size:12px;transform:scaleX(0.8993);transform-origin:right 50%;">424,671 KB</div>
<svg class="a" style="left:19px;top:83px" width="16" height="16" viewBox="0 0 16 16"><path d="M3 0.5 H10 L13.5 4 V15.5 H3Z" fill="#fff" stroke="#8a8a8a" stroke-width="1"/><path d="M10 0.5 V4 H13.5" fill="none" stroke="#8a8a8a" stroke-width="1"/><rect x="1" y="7" width="13" height="6" fill="#e8141c"/><text x="7.5" y="11.8" font-size="4.6" font-weight="bold" fill="#fff" text-anchor="middle" font-family="Liberation Sans">PDF</text></svg>
<div class="t nm" style="left:39px;top:84px;font-size:12px;transform:scaleX(0.9970);transform-origin:left 50%;">Panasonic Projector - How to reset the air filter counter</div>
<div class="t det" style="left:358px;top:84px;font-size:12px;transform:scaleX(0.9589);transform-origin:left 50%;">12/1/2025 8:28 AM</div>
<div class="t det" style="left:502px;top:84px;font-size:12px;transform:scaleX(0.9804);transform-origin:left 50%;">Firefox PDF Document</div>
<div class="t det" style="right:30px;top:84px;font-size:12px;transform:scaleX(0.9122);transform-origin:right 50%;">98 KB</div>
<svg class="a" style="left:7px;top:115px" width="12" height="7" viewBox="0 0 12 7"><path d="M0.5 0.8 L5.5 5.8 L10.5 0.8" fill="none" stroke="#7a7a7a" stroke-width="1"/></svg>
<div class="t grp" style="left:22px;top:109px;font-size:15px;transform:scaleX(0.9156);transform-origin:left 50%;font-size:15.6px;">Last week</div>
<svg class="a" style="left:19px;top:136px" width="16" height="16" viewBox="0 0 16 16"><path d="M3 0.5 H10 L13.5 4 V15.5 H3Z" fill="#fff" stroke="#8a8a8a" stroke-width="1"/><path d="M10 0.5 V4 H13.5" fill="none" stroke="#8a8a8a" stroke-width="1"/><rect x="5" y="6" width="6" height="6" fill="#2a7fd8"/><path d="M5 12 L8 8.5 L11 12Z" fill="#bfe0ff"/></svg>
<div class="t nm" style="left:39px;top:137px;font-size:12px;transform:scaleX(0.9003);transform-origin:left 50%;">78580470858__8193E0DB-C684-4562-B473-09062E1EF24A</div>
<div class="t det" style="left:358px;top:137px;font-size:12px;transform:scaleX(0.9560);transform-origin:left 50%;">11/25/2025 4:08 PM</div>
<div class="t det" style="left:502px;top:137px;font-size:12px;transform:scaleX(0.9378);transform-origin:left 50%;">HEIC File</div>
<div class="t det" style="right:30px;top:137px;font-size:12px;transform:scaleX(0.9123);transform-origin:right 50%;">592 KB</div>
<svg class="a" style="left:19px;top:157px" width="16" height="16" viewBox="0 0 16 16"><path d="M0.5 3 Q0.5 2 1.5 2 H6 L7.5 3.5 H14.5 Q15.5 3.5 15.5 4.5 V13 Q15.5 14 14.5 14 H1.5 Q0.5 14 0.5 13Z" fill="#f0b92c"/><rect x="0.5" y="5" width="15" height="9" rx="0.8" fill="#ffd65a"/><rect x="1" y="8" width="14" height="3" fill="#d8d0b8"/><path d="M2 9.5 H14" stroke="#777" stroke-width="1" stroke-dasharray="1 1"/></svg>
<div class="t nm" style="left:39px;top:158px;font-size:12px;transform:scaleX(0.9939);transform-origin:left 50%;">No_subject</div>
<div class="t det" style="left:358px;top:158px;font-size:12px;transform:scaleX(0.9535);transform-origin:left 50%;">11/25/2025 10:30 AM</div>
<div class="t det" style="left:502px;top:158px;font-size:12px;transform:scaleX(0.9874);transform-origin:left 50%;">Compressed (zipped) Folder</div>
<div class="t det" style="right:30px;top:158px;font-size:12px;transform:scaleX(0.8956);transform-origin:right 50%;">1,631 KB</div>
<svg class="a" style="left:19px;top:178px" width="16" height="16" viewBox="0 0 16 16"><path d="M3 0.5 H10 L13.5 4 V15.5 H3Z" fill="#fff" stroke="#8a8a8a" stroke-width="1"/><path d="M10 0.5 V4 H13.5" fill="none" stroke="#8a8a8a" stroke-width="1"/><rect x="1" y="7" width="13" height="6" fill="#e8141c"/><text x="7.5" y="11.8" font-size="4.6" font-weight="bold" fill="#fff" text-anchor="middle" font-family="Liberation Sans">PDF</text></svg>
<div class="t nm" style="left:39px;top:179px;font-size:12px;transform:scaleX(0.9124);transform-origin:left 50%;">823_1764085500</div>
<div class="t det" style="left:358px;top:179px;font-size:12px;transform:scaleX(0.9560);transform-origin:left 50%;">11/25/2025 8:45 AM</div>
<div class="t det" style="left:502px;top:179px;font-size:12px;transform:scaleX(0.9804);transform-origin:left 50%;">Firefox PDF Document</div>
<div class="t det" style="right:30px;top:179px;font-size:12px;transform:scaleX(0.9120);transform-origin:right 50%;">7 KB</div>
<svg class="a" style="left:19px;top:199px" width="16" height="16" viewBox="0 0 16 16"><path d="M3 0.5 H10 L13.5 4 V15.5 H3Z" fill="#fff" stroke="#8a8a8a" stroke-width="1"/><path d="M10 0.5 V4 H13.5" fill="none" stroke="#8a8a8a" stroke-width="1"/><rect x="1" y="7" width="13" height="6" fill="#e8141c"/><text x="7.5" y="11.8" font-size="4.6" font-weight="bold" fill="#fff" text-anchor="middle" font-family="Liberation Sans">PDF</text></svg>
<div class="t nm" style="left:39px;top:200px;font-size:12px;transform:scaleX(0.9706);transform-origin:left 50%;">Privacy Guide-1</div>
<div class="t det" style="left:358px;top:200px;font-size:12px;transform:scaleX(0.9560);transform-origin:left 50%;">11/24/2025 3:18 PM</div>
<div class="t det" style="left:502px;top:200px;font-size:12px;transform:scaleX(0.9804);transform-origin:left 50%;">Firefox PDF Document</div>
<div class="t det" style="right:30px;top:200px;font-size:12px;transform:scaleX(0.9123);transform-origin:right 50%;">208 KB</div>
<svg class="a" style="left:19px;top:220px" width="16" height="16" viewBox="0 0 16 16"><path d="M3 0.5 H10 L13.5 4 V15.5 H3Z" fill="#fff" stroke="#8a8a8a" stroke-width="1"/><path d="M10 0.5 V4 H13.5" fill="none" stroke="#8a8a8a" stroke-width="1"/><rect x="1" y="7" width="13" height="6" fill="#e8141c"/><text x="7.5" y="11.8" font-size="4.6" font-weight="bold" fill="#fff" text-anchor="middle" font-family="Liberation Sans">PDF</text></svg>
<div class="t nm" style="left:39px;top:221px;font-size:12px;transform:scaleX(0.9922);transform-origin:left 50%;">Privacy Guide</div>
<div class="t det" style="left:358px;top:221px;font-size:12px;transform:scaleX(0.9560);transform-origin:left 50%;">11/24/2025 3:16 PM</div>
<div class="t det" style="left:502px;top:221px;font-size:12px;transform:scaleX(0.9804);transform-origin:left 50%;">Firefox PDF Document</div>
<div class="t det" style="right:30px;top:221px;font-size:12px;transform:scaleX(0.9123);transform-origin:right 50%;">208 KB</div>
<svg class="a" style="left:19px;top:241px" width="16" height="16" viewBox="0 0 16 16"><path d="M3 0.5 H10 L13.5 4 V15.5 H3Z" fill="#fff" stroke="#8a8a8a" stroke-width="1"/><path d="M10 0.5 V4 H13.5" fill="none" stroke="#8a8a8a" stroke-width="1"/><rect x="6" y="5" width="5" height="6" fill="#41a5ee"/><rect x="0.5" y="9" width="7" height="6.5" rx="0.8" fill="#185abd"/><text x="4" y="14.2" font-size="5.5" font-weight="bold" fill="#fff" text-anchor="middle" font-family="Liberation Sans">W</text></svg>
<div class="t nm" style="left:39px;top:242px;font-size:12px;transform:scaleX(0.9922);transform-origin:left 50%;">Privacy Guide</div>
<div class="t det" style="left:358px;top:242px;font-size:12px;transform:scaleX(0.9560);transform-origin:left 50%;">11/24/2025 3:15 PM</div>
<div class="t det" style="left:502px;top:242px;font-size:12px;transform:scaleX(0.9936);transform-origin:left 50%;">Microsoft Word Document</div>
<div class="t det" style="right:30px;top:242px;font-size:12px;transform:scaleX(0.9123);transform-origin:right 50%;">255 KB</div>
<svg class="a" style="left:19px;top:262px" width="16" height="16" viewBox="0 0 16 16"><path d="M3 0.5 H10 L13.5 4 V15.5 H3Z" fill="#fff" stroke="#8a8a8a" stroke-width="1"/><path d="M10 0.5 V4 H13.5" fill="none" stroke="#8a8a8a" stroke-width="1"/><rect x="1" y="7" width="13" height="6" fill="#e8141c"/><text x="7.5" y="11.8" font-size="4.6" font-weight="bold" fill="#fff" text-anchor="middle" font-family="Liberation Sans">PDF</text></svg>
<div class="t nm" style="left:39px;top:263px;font-size:12px;transform:scaleX(0.9124);transform-origin:left 50%;">820_1764020529</div>
<div class="t det" style="left:358px;top:263px;font-size:12px;transform:scaleX(0.9560);transform-origin:left 50%;">11/24/2025 2:42 PM</div>
<div class="t det" style="left:502px;top:263px;font-size:12px;transform:scaleX(0.9804);transform-origin:left 50%;">Firefox PDF Document</div>
<div class="t det" style="right:30px;top:263px;font-size:12px;transform:scaleX(0.9120);transform-origin:right 50%;">7 KB</div>
<svg class="a" style="left:19px;top:283px" width="16" height="16" viewBox="0 0 16 16"><path d="M0.5 3 Q0.5 2 1.5 2 H6 L7.5 3.5 H14.5 Q15.5 3.5 15.5 4.5 V13 Q15.5 14 14.5 14 H1.5 Q0.5 14 0.5 13Z" fill="#f0b92c"/>
<path d="M0.5 5.5 Q0.5 4.8 1.3 4.8 H14.7 Q15.5 4.8 15.5 5.6 V13.2 Q15.5 14 14.7 14 H1.3 Q0.5 14 0.5 13.2Z" fill="#ffd65a"/><path d="M0.5 5.5 Q0.5 4.8 1.3 4.8 H14.7 Q15.5 4.8 15.5 5.6 V7 H0.5Z" fill="#ffe48c"/></svg>
<div class="t nm" style="left:39px;top:284px;font-size:12px;transform:scaleX(0.9939);transform-origin:left 50%;">No_subject</div>
<div class="t det" style="left:358px;top:284px;font-size:12px;transform:scaleX(0.9535);transform-origin:left 50%;">11/25/2025 10:30 AM</div>
<div class="t det" style="left:502px;top:284px;font-size:12px;transform:scaleX(1.0004);transform-origin:left 50%;">File folder</div>
<svg class="a" style="left:7px;top:315px" width="12" height="7" viewBox="0 0 12 7"><path d="M0.5 0.8 L5.5 5.8 L10.5 0.8" fill="none" stroke="#7a7a7a" stroke-width="1"/></svg>
<div class="t grp" style="left:22px;top:309px;font-size:15px;transform:scaleX(0.9173);transform-origin:left 50%;font-size:15.6px;">Last month</div>
<svg class="a" style="left:19px;top:336px" width="16" height="16" viewBox="0 0 16 16"><path d="M3.5 1.5 H14.5 Q15.5 1.5 15.5 2.5 V12.5 Q15.5 13.5 14.5 13.5 H3.5Z" fill="#fff" stroke="#9a9a9a" stroke-width="1"/><circle cx="10" cy="7" r="3.6" fill="#ed6c47"/><path d="M10 3.4 A3.6 3.6 0 0 1 13.6 7 H10Z" fill="#ff9a70"/><rect x="0.5" y="8" width="7" height="7.5" rx="1" fill="#c43e1c"/><text x="4" y="14.3" font-size="6" font-weight="bold" fill="#fff" text-anchor="middle" font-family="Liberation Sans">P</text></svg>
<div class="t nm" style="left:39px;top:337px;font-size:12px;transform:scaleX(0.9452);transform-origin:left 50%;">SKYTRAK Evenplay 2026</div>
<div class="t det" style="left:358px;top:337px;font-size:12px;transform:scaleX(0.9560);transform-origin:left 50%;">11/20/2025 2:11 PM</div>
<div class="t det" style="left:502px;top:337px;font-size:12px;transform:scaleX(0.9984);transform-origin:left 50%;">Microsoft PowerPoint Presentation</div>
<div class="t det" style="right:30px;top:337px;font-size:12px;transform:scaleX(0.8977);transform-origin:right 50%;">63,788 KB</div>
<svg class="a" style="left:19px;top:357px" width="16" height="16" viewBox="0 0 16 16"><path d="M3 0.5 H10 L13.5 4 V15.5 H3Z" fill="#fff" stroke="#8a8a8a" stroke-width="1"/><path d="M10 0.5 V4 H13.5" fill="none" stroke="#8a8a8a" stroke-width="1"/><circle cx="8" cy="9.5" r="3.6" fill="#222"/><path d="M7 8 L9.7 9.5 L7 11Z" fill="#fff"/><circle cx="8" cy="9.5" r="3.6" fill="none" stroke="#e8a020" stroke-width="0.6"/></svg>
<div class="t nm" style="left:39px;top:358px;font-size:12px;transform:scaleX(0.9130);transform-origin:left 50%;">202511191424060000</div>
<div class="t det" style="left:358px;top:358px;font-size:12px;transform:scaleX(0.9560);transform-origin:left 50%;">11/19/2025 2:24 PM</div>
<div class="t det" style="left:502px;top:358px;font-size:12px;transform:scaleX(0.9401);transform-origin:left 50%;">MP4 File</div>
<div class="t det" style="right:30px;top:358px;font-size:12px;transform:scaleX(0.8977);transform-origin:right 50%;">12,452 KB</div>
<svg class="a" style="left:19px;top:378px" width="16" height="16" viewBox="0 0 16 16"><path d="M3 0.5 H10 L13.5 4 V15.5 H3Z" fill="#fff" stroke="#8a8a8a" stroke-width="1"/><path d="M10 0.5 V4 H13.5" fill="none" stroke="#8a8a8a" stroke-width="1"/><rect x="1" y="7" width="13" height="6" fill="#e8141c"/><text x="7.5" y="11.8" font-size="4.6" font-weight="bold" fill="#fff" text-anchor="middle" font-family="Liberation Sans">PDF</text></svg>
<div class="t nm" style="left:39px;top:379px;font-size:12px;transform:scaleX(0.9128);transform-origin:left 50%;">AH04243277</div>
<div class="t det" style="left:358px;top:379px;font-size:12px;transform:scaleX(0.9560);transform-origin:left 50%;">11/18/2025 5:56 PM</div>
<div class="t det" style="left:502px;top:379px;font-size:12px;transform:scaleX(0.9804);transform-origin:left 50%;">Firefox PDF Document</div>
<div class="t det" style="right:30px;top:379px;font-size:12px;transform:scaleX(0.9122);transform-origin:right 50%;">10 KB</div>
<svg class="a" style="left:19px;top:399px" width="16" height="16" viewBox="0 0 16 16"><circle cx="8" cy="8" r="7.6" fill="#192e45"/><path d="M2.5 9 Q3 4 8 3.5 Q12 3.5 13 6 L11 7.5 Q9.5 7 8.5 9 Q7 12 4 11.5Z" fill="#d9b037"/><path d="M8.5 9 L13.5 10.5 L11 14 Q9 12 8.5 9Z" fill="#3b8fd8"/><path d="M10 7.8 L14 9 L12 11Z" fill="#f3d33c"/></svg>
<div class="t nm" style="left:39px;top:400px;font-size:12px;transform:scaleX(0.9752);transform-origin:left 50%;">Install Mullvad VPN</div>
<div class="t det" style="left:358px;top:400px;font-size:12px;transform:scaleX(0.9560);transform-origin:left 50%;">11/18/2025 3:41 PM</div>
<div class="t det" style="left:502px;top:400px;font-size:12px;transform:scaleX(1.0079);transform-origin:left 50%;">Application</div>
<div class="t det" style="right:30px;top:400px;font-size:12px;transform:scaleX(0.8956);transform-origin:right 50%;">2,543 KB</div>
<svg class="a" style="left:19px;top:420px" width="16" height="16" viewBox="0 0 16 16"><rect x="0" y="0" width="16" height="16" rx="1" fill="#bf0000"/><text x="8" y="13" font-size="12" font-weight="bold" font-style="italic" fill="#fff" text-anchor="middle" font-family="Liberation Sans">Fz</text></svg>
<div class="t nm" style="left:39px;top:421px;font-size:12px;transform:scaleX(0.9481);transform-origin:left 50%;">FileZilla_3.69.5_win64-setup</div>
<div class="t det" style="left:358px;top:421px;font-size:12px;transform:scaleX(0.9560);transform-origin:left 50%;">11/18/2025 8:51 AM</div>
<div class="t det" style="left:502px;top:421px;font-size:12px;transform:scaleX(1.0079);transform-origin:left 50%;">Application</div>
<div class="t det" style="right:30px;top:421px;font-size:12px;transform:scaleX(0.8977);transform-origin:right 50%;">12,436 KB</div>
<svg class="a" style="left:19px;top:441px" width="16" height="16" viewBox="0 0 24 24"><defs><radialGradient id="ffg2" cx="0.6" cy="0.35" r="0.7"><stop offset="0" stop-color="#6fe0ea"/><stop offset="0.6" stop-color="#1a9ac8"/><stop offset="1" stop-color="#0d4fa8"/></radialGradient><radialGradient id="ffo2" cx="0.4" cy="0.7" r="0.7"><stop offset="0" stop-color="#ffc040"/><stop offset="0.6" stop-color="#f58a20"/><stop offset="1" stop-color="#d84a10"/></radialGradient></defs><circle cx="12" cy="12.5" r="11" fill="url(#ffo2)"/><circle cx="13.5" cy="10.5" r="8" fill="url(#ffg2)"/><path d="M2 5 L5 8 L9 8.5 L12 11 L10 13 L14 15 Q17 15 19 12 Q18 17 13 19 Q7 19.5 4 15 Q2 11 2 5Z" fill="url(#ffo2)"/><path d="M19.5 4 Q23.5 8 23 13.5 Q22 18 20 19 Q22.5 13 19.5 4Z" fill="#f07a20"/></svg>
<div class="t nm" style="left:39px;top:442px;font-size:12px;transform:scaleX(0.9617);transform-origin:left 50%;">firefox_84139</div>
<div class="t det" style="left:358px;top:442px;font-size:12px;transform:scaleX(0.9560);transform-origin:left 50%;">11/18/2025 8:06 AM</div>
<div class="t det" style="left:502px;top:442px;font-size:12px;transform:scaleX(0.9421);transform-origin:left 50%;">ICO File</div>
<div class="t det" style="right:30px;top:442px;font-size:12px;transform:scaleX(0.9122);transform-origin:right 50%;">67 KB</div>
<svg class="a" style="left:19px;top:462px" width="16" height="16" viewBox="0 0 16 16"><path d="M3 0.5 H10 L13.5 4 V15.5 H3Z" fill="#fff" stroke="#8a8a8a" stroke-width="1"/><path d="M10 0.5 V4 H13.5" fill="none" stroke="#8a8a8a" stroke-width="1"/><rect x="1" y="7" width="13" height="6" fill="#e8141c"/><text x="7.5" y="11.8" font-size="4.6" font-weight="bold" fill="#fff" text-anchor="middle" font-family="Liberation Sans">PDF</text></svg>
<div class="t nm" style="left:39px;top:463px;font-size:12px;transform:scaleX(0.9124);transform-origin:left 50%;">800_1763411442</div>
<div class="t det" style="left:358px;top:463px;font-size:12px;transform:scaleX(0.9560);transform-origin:left 50%;">11/17/2025 1:30 PM</div>
<div class="t det" style="left:502px;top:463px;font-size:12px;transform:scaleX(0.9804);transform-origin:left 50%;">Firefox PDF Document</div>
<div class="t det" style="right:30px;top:463px;font-size:12px;transform:scaleX(0.9120);transform-origin:right 50%;">7 KB</div>
<svg class="a" style="left:19px;top:483px" width="16" height="16" viewBox="0 0 16 16"><rect x="0.5" y="2" width="15" height="10" fill="#fffdf5" stroke="#8b6a4a" stroke-width="1"/><path d="M3 5 H12 M4 7 H10 M3 9 H7" stroke="#6a7fc8" stroke-width="0.8"/><path d="M10 12 L9.5 15.5 L11 14.5 L12.5 15.5 L12 12Z" fill="#1e5ad8"/><circle cx="11" cy="11" r="2.2" fill="#e8a820"/></svg>
<div class="t nm" style="left:39px;top:484px;font-size:12px;transform:scaleX(0.9664);transform-origin:left 50%;">gd_bundle-g2-g1</div>
<div class="t det" style="left:358px;top:484px;font-size:12px;transform:scaleX(0.9535);transform-origin:left 50%;">11/12/2025 11:34 AM</div>
<div class="t det" style="left:502px;top:484px;font-size:12px;transform:scaleX(1.0009);transform-origin:left 50%;">Security Certificate</div>
<div class="t det" style="right:30px;top:484px;font-size:12px;transform:scaleX(0.9120);transform-origin:right 50%;">5 KB</div>
<svg class="a" style="left:19px;top:504px" width="16" height="16" viewBox="0 0 16 16"><path d="M3 0.5 H10 L13.5 4 V15.5 H3Z" fill="#fff" stroke="#8a8a8a" stroke-width="1"/><path d="M10 0.5 V4 H13.5" fill="none" stroke="#8a8a8a" stroke-width="1"/></svg>
<div class="t nm" style="left:39px;top:505px;font-size:12px;transform:scaleX(1.0068);transform-origin:left 50%;">golfcourse.ico</div>
<div class="t det" style="left:358px;top:505px;font-size:12px;transform:scaleX(0.9535);transform-origin:left 50%;">11/12/2025 11:34 AM</div>
<div class="t det" style="left:502px;top:505px;font-size:12px;transform:scaleX(0.9378);transform-origin:left 50%;">HEIC File</div>
<div class="t det" style="right:30px;top:505px;font-size:12px;transform:scaleX(0.9120);transform-origin:right 50%;">3 KB</div>
</div>
</div>
<div class="a" style="left:0;top:0;width:1160px;height:668px;border:1px solid #b2b2b2;border-radius:8px"></div>
<div class="a" style="left:0;top:668px;width:1140px;height:51px;background:linear-gradient(180deg,#b4b4b4 0px,#c2c2c2 1px,#bababa 4px,#9c9c9c 5px,#9c9c9c 6px,#a5a8ab 6px,#b6b9bc 25px,#cdcfd2 51px)"></div>
<div class="a" style="left:643px;top:669px;width:66px;height:4px;background:#c0c0c0"></div>
<div class="a" style="left:709px;top:669px;width:431px;height:4px;background:#b0b0b0"></div>
<div class="a" style="left:643px;top:669px;width:1px;height:4px;background:#9a9a9a"></div>
<div class="a" style="left:709px;top:669px;width:1px;height:4px;background:#9a9a9a"></div>
<div class="a" style="left:918px;top:669px;width:1px;height:4px;background:#9a9a9a"></div>
<div class="a" style="left:6px;top:679px;width:48px;height:39px;background:linear-gradient(90deg,#c4c6c6 0,#c4c6c6 4px,#d9dada 4px,#d9dada 43px,#c6c8c8 43px)"></div>
<svg class="a" style="left:18px;top:684px" width="24" height="24" viewBox="0 0 24 24"><path d="M0 5 Q0 3 2 3 H9 L11 5 H22 Q24 5 24 7 V21 Q24 23 22 23 H2 Q0 23 0 21Z" fill="#d6a21a"/><path d="M0 8 Q0 6.5 1.5 6.5 H22.5 Q24 6.5 24 8 V21 Q24 23 22 23 H2 Q0 23 0 21Z" fill="#f0c040"/><rect x="5" y="15.5" width="14" height="7.5" rx="1.5" fill="#1e7bd0"/><rect x="8" y="18" width="8" height="1" fill="#165fa8"/></svg>
<svg class="a" style="left:62px;top:684px" width="24" height="24" viewBox="0 0 24 24"><defs><radialGradient id="ffg" cx="0.6" cy="0.35" r="0.7"><stop offset="0" stop-color="#6fe0ea"/><stop offset="0.6" stop-color="#1a9ac8"/><stop offset="1" stop-color="#0d4fa8"/></radialGradient><radialGradient id="ffo" cx="0.4" cy="0.7" r="0.7"><stop offset="0" stop-color="#ffc040"/><stop offset="0.6" stop-color="#f58a20"/><stop offset="1" stop-color="#d84a10"/></radialGradient></defs><circle cx="12" cy="12.5" r="11" fill="url(#ffo)"/><circle cx="13.5" cy="10.5" r="8" fill="url(#ffg)"/><path d="M2 5 L5 8 L9 8.5 L12 11 L10 13 L14 15 Q17 15 19 12 Q18 17 13 19 Q7 19.5 4 15 Q2 11 2 5Z" fill="url(#ffo)"/><path d="M19.5 4 Q23.5 8 23 13.5 Q22 18 20 19 Q22.5 13 19.5 4Z" fill="#f07a20"/></svg><div class="a" style="left:71px;top:713px;width:6px;height:3px;border-radius:1.5px;background:#6b6b6b"></div>
<svg class="a" style="left:106px;top:684px" width="24" height="24" viewBox="0 0 24 24"><rect x="7" y="1" width="17" height="22" rx="1.5" fill="#0f6cbd"/><rect x="15" y="1" width="9" height="7" fill="#28a8ea"/><path d="M7 12 L24 23 H8.5 Q7 23 7 21.5Z" fill="#14447d" opacity="0.5"/><path d="M7 12 L24 12 V21.5 Q24 23 22.5 23 H7Z" fill="#1490df"/><rect x="0" y="6" width="12" height="12" rx="1.2" fill="#0a5aa8"/><circle cx="6" cy="12" r="3.3" fill="none" stroke="#fff" stroke-width="1.8"/></svg><div class="a" style="left:115px;top:713px;width:6px;height:3px;border-radius:1.5px;background:#6b6b6b"></div>
<svg class="a" style="left:150px;top:684px" width="24" height="24" viewBox="0 0 24 24"><circle cx="12" cy="12" r="11.5" fill="#1f5bd8"/><text x="11.5" y="15.5" font-size="10" font-weight="bold" fill="#fff" text-anchor="middle" font-family="Liberation Sans">zm</text><circle cx="20" cy="4" r="3.6" fill="#e0384a"/></svg><div class="a" style="left:159px;top:713px;width:6px;height:3px;border-radius:1.5px;background:#6b6b6b"></div>
<svg class="a" style="left:194px;top:684px" width="24" height="24" viewBox="0 0 24 24"><circle cx="12" cy="12" r="11.5" fill="#1ed760"/><path d="M5.5 8.8 Q12.5 6.5 19 10 M6.3 12.4 Q12 10.8 17.8 13.5 M7 15.8 Q11.8 14.6 16.5 16.8" fill="none" stroke="#121212" stroke-width="1.9" stroke-linecap="round"/></svg>
<svg class="a" style="left:238px;top:684px" width="24" height="24" viewBox="0 0 24 24"><rect x="4" y="1" width="20" height="22" rx="2" fill="#2b7cd3"/><rect x="4" y="1" width="20" height="8" rx="2" fill="#41a5ee"/><rect x="4" y="15" width="20" height="8" rx="1.5" fill="#185abd"/><rect x="0" y="11" width="11" height="11" rx="1.2" fill="#103f91"/><text x="5.5" y="19.8" font-size="8.5" font-weight="bold" fill="#fff" text-anchor="middle" font-family="Liberation Sans">W</text></svg>
<svg class="a" style="left:282px;top:684px" width="24" height="24" viewBox="0 0 24 24"><circle cx="12" cy="12" r="11.5" fill="#5865f2"/><path d="M6.5 8 Q9 6.5 10 7 L10.5 8 Q12 7.7 13.5 8 L14 7 Q15 6.5 17.5 8 Q19 11 18.8 15 Q17 16.5 15.3 17 L14.5 15.6 Q12 16.3 9.5 15.6 L8.7 17 Q7 16.5 5.2 15 Q5 11 6.5 8Z" fill="#fff"/><circle cx="9.7" cy="12.3" r="1.3" fill="#5865f2"/><circle cx="14.3" cy="12.3" r="1.3" fill="#5865f2"/></svg>
<svg class="a" style="left:326px;top:684px" width="24" height="24" viewBox="0 0 24 24"><path d="M1 4 L8 1 L15 4 V22 L8 24 L1 22Z" fill="#2fb6c8"/><path d="M8 1 L15 4 V22 L8 24Z" fill="#1b8fa3"/><path d="M2 7 H7 M2 10 H7 M2 13 H7 M2 16 H7 M2 19 H7" stroke="#bff0f6" stroke-width="1"/><path d="M12 10 L18 8 L23 10 V22 L18 24 L12 22Z" fill="#38c4d6"/><path d="M13 13 H17 M13 16 H17 M13 19 H17" stroke="#bff0f6" stroke-width="1"/></svg>
<svg class="a" style="left:370px;top:684px" width="24" height="24" viewBox="0 0 24 24"><path d="M12 0.5 L22 6.2 V17.8 L12 23.5 L2 17.8 V6.2Z" fill="#b9bdc2"/><path d="M12 3.5 L19.5 7.8 V16.2 L12 20.5 L4.5 16.2 V7.8Z" fill="#33373b"/><path d="M12 6 L15.5 8 L12 10 L8.5 8Z" fill="#b9bdc2"/><path d="M6.5 10.5 L9.5 12.2 V15.5 L6.5 13.8Z" fill="#9ea2a6"/><path d="M17.5 10.5 L14.5 12.2 V15.5 L17.5 13.8Z" fill="#9ea2a6"/></svg>
<svg class="a" style="left:414px;top:684px" width="24" height="24" viewBox="0 0 24 24"><circle cx="11.5" cy="11.5" r="11" fill="#6a0bbd"/><path d="M3.5 11 Q3.5 6.5 7.5 6.5 Q10 6.5 11.5 8.5 Q13 6.5 15.5 6.5 Q19.5 6.5 19.5 11 Q19.5 15 15.5 15 Q13 15 11.5 13 Q10 15 7.5 15 Q3.5 15 3.5 11Z" fill="#f2f2f2"/><ellipse cx="7.8" cy="10.8" rx="1.9" ry="1.3" fill="#6a0bbd"/><ellipse cx="15.2" cy="10.8" rx="1.9" ry="1.3" fill="#6a0bbd"/><circle cx="18.5" cy="18.5" r="5" fill="#ff9a1a"/><path d="M14 17 Q15 22.5 19 23.5 Q23 23 23.5 18.5 Q22 21 19 21 Q16 20.5 15.5 17.5Z" fill="#e8204a"/><circle cx="19" cy="18.5" r="2.5" fill="#5b4ce0"/></svg>
<svg class="a" style="left:458px;top:684px" width="24" height="24" viewBox="0 0 24 24"><path d="M5 2 H24 L19 22 H0Z" fill="#2f70c9"/><path d="M6 7 L12 12 L5 17" fill="none" stroke="#fff" stroke-width="2"/><path d="M11 17.5 H16.5" stroke="#fff" stroke-width="2"/></svg>
<svg class="a" style="left:502px;top:684px" width="24" height="24" viewBox="0 0 24 24"><rect x="11" y="0.5" width="12" height="10" fill="#1a2ab8" stroke="#444" stroke-width="1"/><rect x="9" y="10.5" width="15" height="3" fill="#e8e8e8" stroke="#555" stroke-width="0.8"/><rect x="2" y="10" width="12" height="10" fill="#1a2ab8" stroke="#444" stroke-width="1"/><rect x="0" y="20" width="15" height="3.5" fill="#e8e8e8" stroke="#555" stroke-width="0.8"/><path d="M16 5 L10 12 H13 L9 19 L16 11 H13Z" fill="#ffd800" stroke="#806000" stroke-width="0.4"/></svg>
<svg class="a" style="left:546px;top:684px" width="24" height="24" viewBox="0 0 24 24"><rect x="1" y="1" width="22" height="22" fill="#bf0000" stroke="#8a0000" stroke-width="1" stroke-dasharray="1 1"/><text x="12" y="19" font-size="17" font-weight="bold" font-style="italic" fill="#fff" text-anchor="middle" font-family="Liberation Sans">Fz</text></svg>
<svg class="a" style="left:590px;top:684px" width="24" height="24" viewBox="0 0 24 24"><rect x="0" y="3" width="24" height="18" fill="#0c0c0c" stroke="#777" stroke-width="0.8"/><rect x="0" y="3" width="24" height="2" fill="#c8c8c8"/><text x="2" y="11" font-size="5" fill="#ccc" font-family="Liberation Mono">C:_</text><path d="M13 14 H21" stroke="#ccc" stroke-width="1"/></svg>
<svg class="a" style="left:634px;top:684px" width="24" height="24" viewBox="0 0 24 24"><rect x="0.5" y="0.5" width="23" height="23" rx="2" fill="#175ddc"/><path d="M5.5 4.5 H18.5 V12 Q18.5 17 12 20.5 Q5.5 17 5.5 12Z" fill="#fff"/><path d="M12 6 H17 V12 Q17 16 12 19Z" fill="#175ddc"/></svg>
<svg class="a" style="left:678px;top:684px" width="24" height="24" viewBox="0 0 24 24"><path d="M10 0.5 H14 L14.6 3.6 L17.3 4.7 L20 3 L22.8 5.8 L21.1 8.5 L22.3 11.2 L23.5 12 V12.5 L23.5 14 L20.4 14.6 L19.3 17.3 L21 20 L18.2 22.8 L15.5 21.1 L14 21.7 L14 23.5 H10 L9.4 20.4 L6.7 19.3 L4 21 L1.2 18.2 L2.9 15.5 L1.8 14 L0.5 14 V10 L3.6 9.4 L4.7 6.7 L3 4 L5.8 1.2 L8.5 2.9 L9.4 2.5Z" fill="#6b7780"/><circle cx="12" cy="12" r="6" fill="#e6e6e6"/><circle cx="12" cy="12" r="4" fill="#0067c0"/></svg><div class="a" style="left:687px;top:713px;width:6px;height:3px;border-radius:1.5px;background:#6b6b6b"></div>
<svg class="a" style="left:722px;top:684px" width="24" height="24" viewBox="0 0 24 24"><circle cx="12" cy="12" r="11.5" fill="#1a4fd8"/><circle cx="12" cy="12" r="9" fill="#4aa0ff"/><circle cx="12" cy="12" r="6.5" fill="#1d62e6"/><circle cx="12" cy="12" r="3.8" fill="#d8e8ff"/><circle cx="12" cy="12" r="2" fill="#8fb8f0"/></svg><div class="a" style="left:731px;top:713px;width:6px;height:3px;border-radius:1.5px;background:#6b6b6b"></div>
<div class="red" style="left:300px;top:188px;width:202px;height:36px"></div>
<div class="red" style="left:3px;top:233px;width:269px;height:30px"></div>
<div class="red" style="left:1px;top:674px;width:58px;height:44px"></div>
<svg class="a" style="left:0;top:0" width="1140" height="719" viewBox="0 0 1140 719">
<g stroke="#ed1c24" stroke-width="5" stroke-linecap="round" fill="none">
<path d="M302.5 192 V251"/>
<path d="M265 240.5 L301 221"/>
<path d="M279 211.5 L301 221"/>
<path d="M44.5 676 L128.5 259"/>
<path d="M128.5 259 L111 277"/>
<path d="M128.5 259 L140 277"/>
</g></svg>
</body></html>
